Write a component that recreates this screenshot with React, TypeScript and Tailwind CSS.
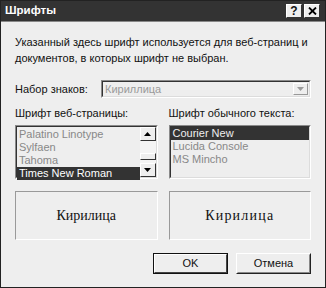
import React from "react";

const font = { fontFamily: '"Liberation Sans", Arial, sans-serif' };

function Bevel({ children, className = "" }: { children?: React.ReactNode; className?: string }) {
  // sunken 3d edge, classic style
  return (
    <div className={`border border-t-[#8a8a8a] border-l-[#8a8a8a] border-b-white border-r-white ${className}`}>
      <div className="h-full border border-t-[#333] border-l-[#333] border-b-[#dcdcdc] border-r-[#dcdcdc]">
        {children}
      </div>
    </div>
  );
}

function Arrow({ up, grey }: { up?: boolean; grey?: boolean }) {
  return (
    <svg width="7" height="4" viewBox="0 0 7 4">
      <polygon
        points={up ? "0,4 7,4 3.5,0" : "0,0 7,0 3.5,4"}
        fill={grey ? "#9a9a9a" : "#000"}
      />
    </svg>
  );
}

function ScrollBtn({ up }: { up?: boolean }) {
  return (
    <div className="h-[14px] w-[16px] flex items-center justify-center bg-[#eee] border border-t-white border-l-white border-b-[#333] border-r-[#333]">
      <Arrow up={up} />
    </div>
  );
}

export default function App() {
  return (
    <div
      className="w-[326px] h-[288px] bg-[#eeeeee] border border-[#222] flex flex-col text-[11px] text-[#111]"
      style={font}
    >
      {/* title bar */}
      <div className="h-[20px] bg-[#333333] flex items-center pl-[4px] pr-[5px] shrink-0">
        <span className="text-white font-bold text-[11.5px] leading-none">Шрифты</span>
        <div className="ml-auto flex gap-[2px]">
          <div className="w-[16px] h-[14px] bg-[#eee] border border-t-white border-l-white border-b-[#333] border-r-[#333] flex items-center justify-center text-[12px] font-bold leading-none">
            ?
          </div>
          <div className="w-[16px] h-[14px] bg-[#eee] border border-t-white border-l-white border-b-[#333] border-r-[#333] flex items-center justify-center">
            <svg width="9" height="8" viewBox="0 0 9 8">
              <path d="M1 0.5 L8 7.5 M8 0.5 L1 7.5" stroke="#000" strokeWidth="1.8" />
            </svg>
          </div>
        </div>
      </div>

      <div className="flex flex-col px-[14px] pt-[12px] border-t border-[#888]">
        <p className="leading-[16px] whitespace-nowrap">
          Указанный здесь шрифт используется для веб-страниц и
          <br />
          документов, в которых шрифт не выбран.
        </p>

        <div className="flex items-center mt-[14px] h-[18px]">
          <span className="w-[86px]">Набор знаков:</span>
          <Bevel className="flex-1 h-[18px]">
            <div className="flex items-center h-full pl-[2px]">
              <span className="text-[#9a9a9a]">Кириллица</span>
              <div className="ml-auto mr-[1px] w-[15px] h-[12px] flex items-center justify-center border border-t-white border-l-white border-b-[#999] border-r-[#999]">
                <Arrow grey />
              </div>
            </div>
          </Bevel>
        </div>

        <div className="grid grid-cols-2 gap-[11px] mt-[8px]">
          <div className="flex flex-col">
            <span className="leading-[14px]">Шрифт веб-страницы:</span>
            <Bevel className="mt-[5px] h-[54px]">
              <div className="flex h-full">
                <div className="flex-1 flex flex-col text-[#888] leading-[13px] pt-[1px]">
                  <span className="pl-[2px]">Palatino Linotype</span>
                  <span className="pl-[2px]">Sylfaen</span>
                  <span className="pl-[2px]">Tahoma</span>
                  <span className="pl-[2px] bg-[#333] text-white">Times New Roman</span>
                </div>
                <div className="w-[16px] flex flex-col bg-[#f4f4f4]">
                  <ScrollBtn up />
                  <div className="h-[7px] mt-auto border border-t-white border-l-white border-b-[#333] border-r-[#333] bg-[#eee]" />
                  <div className="h-[3px]" />
                  <ScrollBtn />
                </div>
              </div>
            </Bevel>
          </div>
          <div className="flex flex-col">
            <span className="leading-[14px]">Шрифт обычного текста:</span>
            <Bevel className="mt-[5px] h-[54px]">
              <div className="flex flex-col text-[#888] leading-[13px]">
                <span className="pl-[2px] bg-[#333] text-[#eee]">Courier New</span>
                <span className="pl-[2px]">Lucida Console</span>
                <span className="pl-[2px]">MS Mincho</span>
              </div>
            </Bevel>
          </div>
        </div>

        <div className="grid grid-cols-2 gap-[11px] mt-[12px]">
          <div className="h-[49px] border border-t-[#999] border-l-[#999] border-b-white border-r-white flex items-center justify-center">
            <span className="text-[14px] text-[#111]" style={{ fontFamily: '"Liberation Serif", serif' }}>
              Кирилица
            </span>
          </div>
          <div className="h-[49px] border border-t-[#999] border-l-[#999] border-b-white border-r-white flex items-center justify-center">
            <span
              className="text-[14px] text-[#111] tracking-[1.2px]"
              style={{ fontFamily: '"Liberation Serif", serif' }}
            >
              Кирилица
            </span>
          </div>
        </div>

        <div className="flex justify-end gap-[8px] mt-[13px]">
          <button className="w-[75px] h-[21px] border border-[#111] bg-[#eee]">
            <div className="h-full border border-t-white border-l-white border-b-[#444] border-r-[#444] flex items-center justify-center">
              OK
            </div>
          </button>
          <button className="w-[75px] h-[21px] bg-[#eee] border border-t-white border-l-white border-b-[#222] border-r-[#222]">
            <div className="h-full border border-transparent border-b-[#888] border-r-[#888] flex items-center justify-center">
              Отмена
            </div>
          </button>
        </div>
      </div>
    </div>
  );
}
